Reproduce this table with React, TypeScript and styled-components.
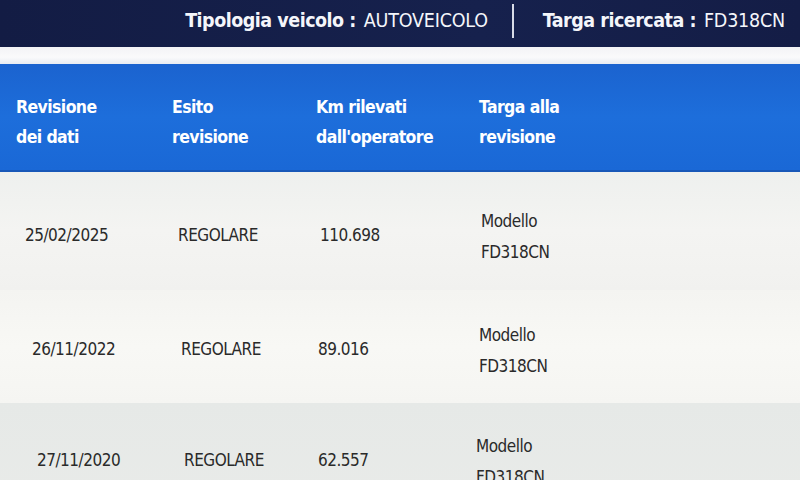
import React from "react";
import styled, { createGlobalStyle } from "styled-components";

const Global = createGlobalStyle`
  html, body { margin: 0; padding: 0; background: #eceeee; }
  body { width: 800px; height: 480px; overflow: hidden; font-family: "DejaVu Sans Condensed", "Liberation Sans Narrow", "Roboto", sans-serif; }
`;

const Page = styled.div`
  width: 800px;
  height: 480px;
  display: flex;
  flex-direction: column;
  overflow: hidden;
  & > * { flex-shrink: 0; }
`;

const TopBar = styled.div`
  height: 47px;
  background: linear-gradient(90deg, #131c44 0%, #16214d 60%, #141d46 100%);
  display: flex;
  align-items: center;
  justify-content: flex-end;
  padding: 0 15px 6px 0;
  box-sizing: border-box;
  color: #f4f6fb;
  font-size: 19.5px;
`;

const Info = styled.div`
  display: flex;
  align-items: baseline;
  gap: 8px;
`;

const Label = styled.span`
  font-weight: 700;
  letter-spacing: -0.5px;
`;

const Value = styled.span`
  font-weight: 400;
  letter-spacing: -0.2px;
`;

const Divider = styled.div`
  width: 2px;
  height: 34px;
  background: #d8dce8;
  margin: 0 29px 0 24px;
`;

const Gap = styled.div`
  height: 17px;
  background: linear-gradient(180deg, #f3f3f6 0%, #fafafb 60%, #e9ecf2 100%);
`;

const HeaderRow = styled.div`
  height: 108px;
  background: linear-gradient(180deg, #1b63cf 0%, #1d6edb 50%, #1a68d6 100%);
  display: grid;
  grid-template-columns: 172px 144px 163px 1fr;
  align-items: start;
  padding-top: 28px;
  box-sizing: border-box;
  border-bottom: 2px solid #1858b8;
`;

const HeadCell = styled.div<{ $pad: number }>`
  padding-left: ${(p) => p.$pad}px;
  color: #ffffff;
  font-weight: 700;
  font-size: 17.5px;
  line-height: 30px;
  letter-spacing: -0.6px;
`;

const Row = styled.div<{ $bg: string; $h: number; $shift: number }>`
  height: ${(p) => p.$h}px;
  box-sizing: border-box;
  padding-top: ${(p) => p.$shift}px;
  background: ${(p) => p.$bg};
  display: grid;
  grid-template-columns: 172px 144px 158px 1fr;
  align-items: center;
  color: #2a2a2a;
  font-size: 17px;
  letter-spacing: -0.5px;
`;

const Cell = styled.div<{ $pad: number }>`
  padding-left: ${(p) => p.$pad}px;
`;

const Plate = styled.div<{ $pad: number }>`
  padding-left: ${(p) => p.$pad}px;
  display: flex;
  flex-direction: column;
  line-height: 31px;
  transform: translateY(2px);
`;

const rows = [
  { date: "25/02/2025", km: "110.698", bg: "linear-gradient(180deg,#eef0ee 0%,#f4f4f2 50%,#f1f1ef 100%)", h: 118, s: 8, p: [25, 6, 4, 7] },
  { date: "26/11/2022", km: "89.016", bg: "linear-gradient(180deg,#f4f4f1 0%,#f8f8f5 50%,#f5f5f2 100%)", h: 113, s: 4, p: [32, 9, 2, 5] },
  { date: "27/11/2020", km: "62.557", bg: "linear-gradient(180deg,#e6e9e7 0%,#e9ebe9 100%)", h: 113, s: 0, p: [37, 12, 2, 2] },
];

export default function App() {
  return (
    <Page>
      <Global />
      <TopBar>
        <Info>
          <Label>Tipologia veicolo :</Label>
          <Value>AUTOVEICOLO</Value>
        </Info>
        <Divider />
        <Info>
          <Label>Targa ricercata :</Label>
          <Value>FD318CN</Value>
        </Info>
      </TopBar>
      <Gap />
      <HeaderRow>
        <HeadCell $pad={16}>Revisione<br />dei dati</HeadCell>
        <HeadCell $pad={0}>Esito<br />revisione</HeadCell>
        <HeadCell $pad={0}>Km rilevati<br />dall'operatore</HeadCell>
        <HeadCell $pad={0}>Targa alla<br />revisione</HeadCell>
      </HeaderRow>
      {rows.map((r) => (
        <Row key={r.date} $bg={r.bg} $h={r.h} $shift={r.s}>
          <Cell $pad={r.p[0]}>{r.date}</Cell>
          <Cell $pad={r.p[1]}>REGOLARE</Cell>
          <Cell $pad={r.p[2]}>{r.km}</Cell>
          <Plate $pad={r.p[3]}>
            <span>Modello</span>
            <span>FD318CN</span>
          </Plate>
        </Row>
      ))}
    </Page>
  );
}
